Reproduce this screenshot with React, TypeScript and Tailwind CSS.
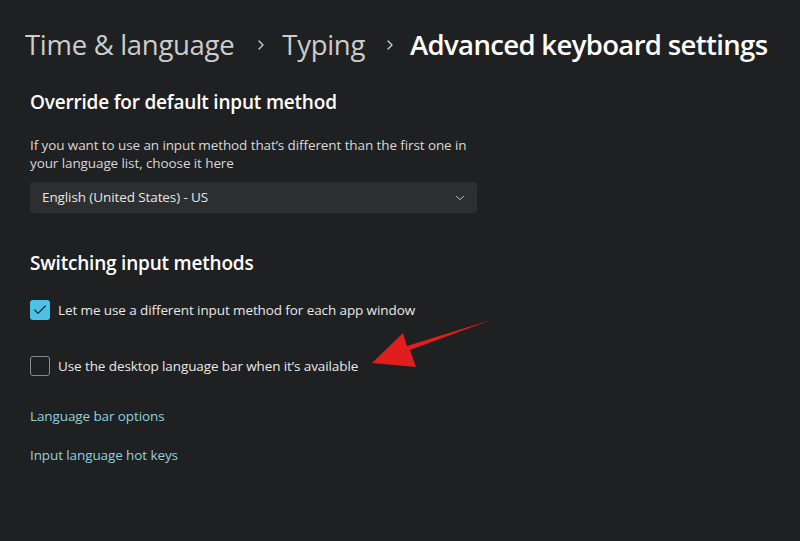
import { ChevronDown, ChevronRight, Check } from "lucide-react";

const font = { fontFamily: '"Segoe UI", "Open Sans", "Noto Sans", sans-serif' };

function CheckRow({ checked, label }: { checked: boolean; label: string }) {
  return (
    <div className="flex items-center gap-2 h-5">
      <div
        className={
          checked
            ? "w-5 h-5 rounded-[3px] bg-[#4cc2e6] flex items-center justify-center"
            : "w-5 h-5 rounded-[3px] border border-[#8a8a8a] bg-[#1f2022]"
        }
      >
        {checked && <Check className="w-4 h-4 text-[#1a1a1a]" strokeWidth={1.6} />}
      </div>
      <span className="text-[13.5px] text-[#e8e8e8] tracking-[-0.1px]">{label}</span>
    </div>
  );
}

export default function App() {
  return (
    <div
      className="relative w-[800px] h-[541px] overflow-hidden bg-[#1f2022] text-white"
      style={font}
    >
      <div className="flex items-center pl-[25px] pt-[25px] text-[27.5px] tracking-[-0.3px] leading-[40px]">
        <span className="text-[#cccccc]">Time &amp; language</span>
        <ChevronRight className="w-4 h-4 ml-[19px] mr-[13px] text-[#cccccc]" strokeWidth={2} />
        <span className="text-[#cccccc]">Typing</span>
        <ChevronRight className="w-4 h-4 ml-[17px] mr-[12px] text-[#cccccc]" strokeWidth={2} />
        <span className="text-white font-semibold tracking-[-0.65px]">Advanced keyboard settings</span>
      </div>

      <div className="pl-[30px] mt-[24px]">
        <h2 className="text-[19px] font-semibold leading-[26px] tracking-[-0.2px]">
          Override for default input method
        </h2>
        <p className="mt-[21px] w-[460px] text-[13.5px] leading-[18px] text-[#d8d8d8] tracking-[-0.1px]">
          If you want to use an input method that’s different than the first one in your
          language list, choose it here
        </p>
        <div className="mt-[10px] w-[447px] h-[31px] bg-[#2c2e30] rounded-[3px] flex items-center justify-between pl-[12px] pr-[10px]">
          <span className="text-[13.5px] text-[#e6e6e6] tracking-[-0.1px]">
            English (United States) - US
          </span>
          <ChevronDown className="w-[14px] h-[14px] text-[#cfcfcf]" strokeWidth={1.6} />
        </div>

        <h2 className="mt-[37px] text-[19px] font-semibold leading-[26px] tracking-[-0.2px]">
          Switching input methods
        </h2>
        <div className="mt-[24px] flex flex-col gap-[36px]">
          <CheckRow checked label="Let me use a different input method for each app window" />
          <CheckRow checked={false} label="Use the desktop language bar when it’s available" />
        </div>

        <div className="mt-[31px] flex flex-col gap-[20px] text-[13.5px] text-[#8fd0dc] tracking-[-0.1px] leading-[19px]">
          <span>Language bar options</span>
          <span>Input language hot keys</span>
        </div>
      </div>

      <svg className="absolute left-0 top-0" width="800" height="541" viewBox="0 0 800 541">
        <path
          d="M491 320 L410 350 L416 367 L372 363 L403 333 L407 346 Z"
          fill="#e01e1e"
        />
      </svg>
    </div>
  );
}
